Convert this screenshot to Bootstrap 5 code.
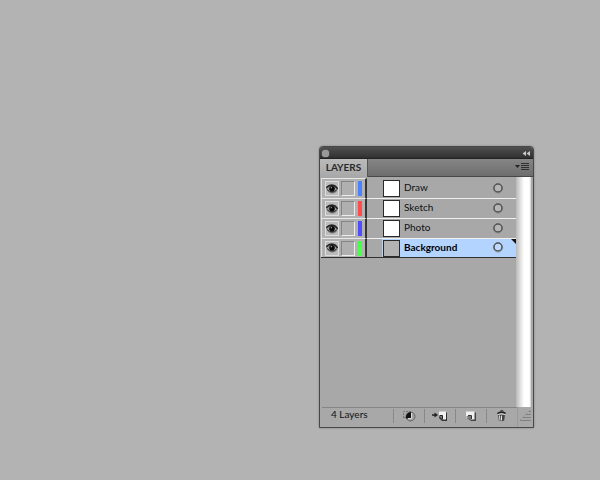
<!DOCTYPE html>
<html lang="en">
<head>
<meta charset="utf-8">
<meta name="viewport" content="width=device-width, initial-scale=1">
<title>Layers</title>
<link href="https://cdn.jsdelivr.net/npm/bootstrap@5.3.0/dist/css/bootstrap.min.css" rel="stylesheet">
<style>
  body { background: #b3b3b3; font-family: Lato, "Open Sans", sans-serif; font-size: 10px; line-height: 14px; color: #111; }
  button { appearance: none; border: 0; padding: 0; background: none; color: inherit; }
  svg { display: block; flex: none; }
  .workspace { padding: 146px 66px 48px 16px; }
  .layers-panel { width: 215px; background: #a8a8a8; border: 1px solid #484848; border-radius: 4px 4px 0 0; box-shadow: 0 0 2px #777; }
  .title-strip { height: 12px; padding: 0 2px; background: linear-gradient(#505050, #333 85%, #1d1d1d); border-radius: 3px 3px 0 0; }
  .close-dot { width: 7px; height: 7px; border-radius: 50%; background: #999; box-shadow: 0 0 1px #ccc; }
  .tab-strip { height: 18px; padding-right: 3px; background: linear-gradient(#868686, #6d6d6d); border-bottom: 1px solid #484848; }
  .panel-tab { height: 18px; width: 48px; background: linear-gradient(#bababa, #a8a8a8); border-right: 1px solid #555; font-weight: 700; line-height: 17px; text-align: center; color: #292929; }
  .panel-body { min-height: 230px; }
  .layer-list { padding-left: 1px; padding-top: 1px; }
  .layer-row { height: 20px; }
  .layer-switches { width: 46px; gap: 2px; padding: 0 2px 0 3px; border-top: 1px solid #e8e8e8; border-left: 1px solid #ddd; border-right: 2px solid #353535; background: #b1b1b1; }
  .switch-box { width: 14px; height: 15px; border: 1px solid; border-color: #858585 #eee #eee #858585; background: #b0b0b0; }
  .switch-box.visible-on { border-color: #ddd; background: #bbb; }
  .color-chip { width: 4px; height: 15px; margin-left: 1px; }
  .chip-draw { background: #4d82ff; }
  .chip-sketch { background: #ff4d4d; }
  .chip-photo { background: #504dff; }
  .chip-background { background: #4dff4d; }
  .layer-main { border-top: 1px solid #a8a8a8; padding-left: 1px; margin-left: 15px; }
  .layer-row + .layer-row .layer-main { border-top-color: #f0f0f0; }
  .row-gutter { width: 15px; border-top: 1px solid #a8a8a8; margin-right: -15px; }
  .layer-row + .layer-row .row-gutter { border-top-color: #f0f0f0; }
  .thumb { width: 17px; height: 17px; border: 1px solid #292929; background: #fff; }
  .layer-name { margin-left: 4px; text-align: left; line-height: 15px; padding-bottom: 2px; }
  .target-button { margin-right: 12px; padding-bottom: 2px; }
  .layer-row.selected { height: 19px; }
  .layer-row.selected .layer-main { background: #b3d4ff; position: relative; }
  .layer-row.selected .thumb { background: #b3b3b3; }
  .layer-row.selected .layer-name { font-weight: 700; color: #000; }
  .selected-corner { position: absolute; right: 0; top: 0; }
  .layer-list-end { height: 1px; background: #303030; }
  .scroll-track { width: 15px; margin-right: 2px; background: linear-gradient(90deg, #b8b8b8, #e8e8e8 35%, #fff 55%, #fff 88%, #cfcfcf); }
  .panel-footer { height: 20px; padding-left: 2px; }
  .layer-count { width: 71px; padding-left: 9px; line-height: 13px; border-top: 1px solid #858585; }
  .footer-tool { width: 31px; border-top: 1px solid #858585; padding-bottom: 4px; }
  .footer-tool::before { content: ""; width: 1px; height: 14px; background: #888; }
  .tool-icon { flex: 1; padding-right: 1px; }
  .grip-box { flex: 1; padding-right: 2px; padding-bottom: 6px; border-left: 1px solid #999; }
</style>
<script src="https://cdn.jsdelivr.net/npm/bootstrap@5.3.0/dist/js/bootstrap.bundle.min.js"></script>
</head>
<body>
<svg width="0" height="0" class="position-absolute" aria-hidden="true">
  <defs>
    <symbol id="eye" viewBox="0 0 12 12">
      <path d="M0 5Q2 1 6 1.300Q10.500 1.700 12 5.500Q10.500 10.500 6 10.500Q2 10 0 5Z" fill="#555" opacity=".6"/>
      <path d="M1 5.500Q3 3 6 3Q9.500 3.300 11 6Q8.500 9 5.500 8.800Q2.500 8.500 1 5.500Z" fill="#999"/>
      <path d="M.2 4.800Q3 2.200 6 2.300Q9.700 2.500 11.500 6" fill="none" stroke="#222" stroke-width="1.500"/>
      <path d="M1 6.500Q3.500 9.300 6 9Q9 9 10.500 7" fill="none" stroke="#333"/>
      <circle cx="6" cy="5.700" r="2.800" fill="#080808"/>
      <circle cx="5.300" cy="4.700" r=".6" fill="#ccc"/>
    </symbol>
    <symbol id="ring" viewBox="0 0 12 12">
      <circle cx="6" cy="6.500" r="4.600" fill="none" stroke="#777" opacity=".5"/>
      <circle cx="6" cy="6" r="4" fill="#fff" fill-opacity=".15" stroke="#555" stroke-width="1.500"/>
    </symbol>
  </defs>
</svg>
<main class="workspace d-flex justify-content-end">
  <section class="layers-panel d-flex flex-column" aria-label="Layers panel">
    <div class="title-strip d-flex align-items-center justify-content-between">
      <button type="button" class="close-dot" aria-label="Close"></button>
      <button type="button" aria-label="Collapse"><svg width="9" height="7" viewBox="0 0 9 7"><path d="M4 1V6L.5 3.500ZM8 1V6L4.500 3.500Z" fill="#c8c8c8"/></svg></button>
    </div>
    <div class="tab-strip d-flex align-items-center justify-content-between">
      <button type="button" class="panel-tab">LAYERS</button>
      <button type="button" aria-label="Panel menu"><svg width="15" height="9" viewBox="0 0 15 9"><path d="M0 2H5L2.500 5Z" fill="#222"/><path d="M6 .5H14M6 2.500H14M6 4.500H14M6 6.500H14" stroke="#303030"/></svg></button>
    </div>
    <div class="panel-body d-flex">
      <div class="flex-grow-1">
        <div class="layer-list">
          <div class="layer-row d-flex">
            <div class="layer-switches d-flex align-items-center"><button type="button" class="switch-box visible-on" aria-label="Hide Draw"><svg width="12" height="12"><use href="#eye"/></svg></button><button type="button" class="switch-box" aria-label="Lock Draw"></button><span class="color-chip chip-draw"></span></div>
            <span class="row-gutter"></span>
            <div class="layer-main d-flex align-items-center flex-grow-1"><span class="thumb"></span><button type="button" class="layer-name flex-grow-1">Draw</button><button type="button" class="target-button" aria-label="Target Draw"><svg width="12" height="12"><use href="#ring"/></svg></button></div>
          </div>
          <div class="layer-row d-flex">
            <div class="layer-switches d-flex align-items-center"><button type="button" class="switch-box visible-on" aria-label="Hide Sketch"><svg width="12" height="12"><use href="#eye"/></svg></button><button type="button" class="switch-box" aria-label="Lock Sketch"></button><span class="color-chip chip-sketch"></span></div>
            <span class="row-gutter"></span>
            <div class="layer-main d-flex align-items-center flex-grow-1"><span class="thumb"></span><button type="button" class="layer-name flex-grow-1">Sketch</button><button type="button" class="target-button" aria-label="Target Sketch"><svg width="12" height="12"><use href="#ring"/></svg></button></div>
          </div>
          <div class="layer-row d-flex">
            <div class="layer-switches d-flex align-items-center"><button type="button" class="switch-box visible-on" aria-label="Hide Photo"><svg width="12" height="12"><use href="#eye"/></svg></button><button type="button" class="switch-box" aria-label="Lock Photo"></button><span class="color-chip chip-photo"></span></div>
            <span class="row-gutter"></span>
            <div class="layer-main d-flex align-items-center flex-grow-1"><span class="thumb"></span><button type="button" class="layer-name flex-grow-1">Photo</button><button type="button" class="target-button" aria-label="Target Photo"><svg width="12" height="12"><use href="#ring"/></svg></button></div>
          </div>
          <div class="layer-row selected d-flex">
            <div class="layer-switches d-flex align-items-center"><button type="button" class="switch-box visible-on" aria-label="Hide Background"><svg width="12" height="12"><use href="#eye"/></svg></button><button type="button" class="switch-box" aria-label="Lock Background"></button><span class="color-chip chip-background"></span></div>
            <span class="row-gutter"></span>
            <div class="layer-main d-flex align-items-center flex-grow-1"><span class="thumb"></span><button type="button" class="layer-name flex-grow-1">Background</button><button type="button" class="target-button" aria-label="Target Background"><svg width="12" height="12"><use href="#ring"/></svg></button><svg class="selected-corner" width="5" height="5" viewBox="0 0 5 5"><path d="M0 0H5V5Z" fill="#111"/></svg></div>
          </div>
          <div class="layer-list-end"></div>
        </div>
      </div>
      <div class="scroll-track"></div>
    </div>
    <div class="panel-footer d-flex">
      <div class="layer-count">4 Layers</div>
      <button type="button" class="footer-tool d-flex align-items-center" aria-label="Make clipping mask"><span class="tool-icon d-flex justify-content-center"><svg width="14" height="12" viewBox="0 0 14 12"><path d="M1.500 8V1.500H9" fill="none" stroke="#777" stroke-dasharray="2 1"/><path d="M1.500 7.500H4" stroke="#777"/><circle cx="8.500" cy="6.500" r="4.500" fill="#a0a0a0" stroke="#666"/><path d="M4 8.500V6.500Q4.500 2.500 9 2V8.500Z" fill="#111"/><path d="M9.500 3V8.500H6" fill="none" stroke="#ddd"/></svg></span></button>
      <button type="button" class="footer-tool d-flex align-items-center" aria-label="Create new sublayer"><span class="tool-icon d-flex justify-content-center"><svg width="16" height="12" viewBox="0 0 16 12"><path d="M0 5H4" stroke="#222" stroke-width="1.500"/><path d="M2.500 2.500L6 5L2.500 7.500Z" fill="#222"/><path d="M8 2.500H15V11H10L7 8Z" fill="#333"/><path d="M7 1.500H14V9.500H10.500V6H7Z" fill="#f2f2f2"/><path d="M7 6H10.500V9.500Z" fill="#777"/><path d="M7.500 5.500H10.500V9" fill="none" stroke="#222"/></svg></span></button>
      <button type="button" class="footer-tool d-flex align-items-center" aria-label="Create new layer"><span class="tool-icon d-flex justify-content-center"><svg width="12" height="12" viewBox="0 0 12 12"><path d="M2 2.500H11V11H6L2 8Z" fill="#444"/><path d="M1 1.500H9.500V9.500H6L1 7Z" fill="#f0f0f0"/><path d="M1 6H6V10.500Z" fill="#777"/><path d="M3 5.500H6.500V9" fill="none" stroke="#333"/></svg></span></button>
      <button type="button" class="footer-tool d-flex align-items-center" aria-label="Delete selection"><span class="tool-icon d-flex justify-content-center"><svg width="11" height="13" viewBox="0 0 11 13"><path d="M2 5.500H9L8.200 11.500Q5.500 13 2.900 11.500Z" fill="#444"/><path d="M3.500 6.500L4 11.500M5.500 6.500V11.500" stroke="#e3e3e3"/><path d="M1.500 4.800Q5.500 1.700 9.500 4.500" fill="none" stroke="#222" stroke-width="2"/><path d="M4 2.500Q5.500 .3 7.500 2.300" fill="none" stroke="#333"/><path d="M2 5.500Q5.500 4 9 5.500" fill="none" stroke="#ddd"/></svg></span></button>
      <div class="grip-box d-flex align-items-end justify-content-end"><svg width="12" height="12" viewBox="0 0 12 12"><path d="M10 2.500H12M7 5.500H12M4 8.500H12M1 11.500H12" stroke="#808080"/><path d="M1 11L11 1" stroke="#999"/></svg></div>
    </div>
  </section>
</main>
</body>
</html>
